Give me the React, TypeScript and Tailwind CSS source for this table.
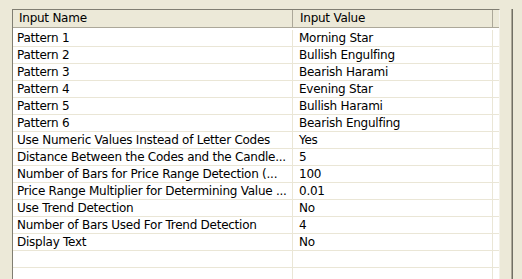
const inputs: [string, string][] = [
  ['Pattern 1', 'Morning Star'],
  ['Pattern 2', 'Bullish Engulfing'],
  ['Pattern 3', 'Bearish Harami'],
  ['Pattern 4', 'Evening Star'],
  ['Pattern 5', 'Bullish Harami'],
  ['Pattern 6', 'Bearish Engulfing'],
  ['Use Numeric Values Instead of Letter Codes', 'Yes'],
  ['Distance Between the Codes and the Candle...', '5'],
  ['Number of Bars for Price Range Detection (...', '100'],
  ['Price Range Multiplier for Determining Value ...', '0.01'],
  ['Use Trend Detection', 'No'],
  ['Number of Bars Used For Trend Detection', '4'],
  ['Display Text', 'No'],
  ['', ''],
  ['', ''],
];

function Row({ name, value }: { name: string; value: string }) {
  return (
    <div className="flex h-[17px] border-b border-[#EAE6D6] leading-[16px]">
      <div className="w-[280px] shrink-0 border-r border-[#EAE6D6] pl-[4px] whitespace-nowrap overflow-hidden">
        {name}
      </div>
      <div className="w-[200px] shrink-0 border-r border-[#EAE6D6] pl-[6px] whitespace-nowrap overflow-hidden">
        {value}
      </div>
      <div className="flex-1" />
    </div>
  );
}

export default function App() {
  return (
    <div
      className="flex w-[522px] h-[279px] overflow-hidden bg-[#ECE9D8] text-black text-[12px] tracking-[-0.25px] pl-[12px] pt-[9px]"
      style={{ fontFamily: '"DejaVu Sans", sans-serif' }}
    >
      {/* property grid */}
      <div className="w-[488px] shrink-0 h-[290px] border-t border-l border-[#807E72] border-r border-r-[#F4F2EA] bg-white flex flex-col">
        <div className="flex h-[18px] shrink-0 bg-[#ECE9D8] border-b border-[#ACA899] leading-[17px]">
          <div className="w-[280px] shrink-0 border-r border-[#ACA899] pl-[6px]">Input Name</div>
          <div className="w-[200px] shrink-0 border-r border-[#ACA899] pl-[7px]">Input Value</div>
          <div className="flex-1" />
        </div>
        <div className="pt-[2px]">
          {inputs.map(([name, value], i) => (
            <Row key={i} name={name} value={value} />
          ))}
        </div>
      </div>
      {/* splitter */}
      <div className="w-[11px] shrink-0" />
      <div className="w-[1px] shrink-0 bg-[#ACA899]" />
      <div className="w-[1px] shrink-0 bg-[#716F64]" />
      <div className="flex-1" />
    </div>
  );
}
